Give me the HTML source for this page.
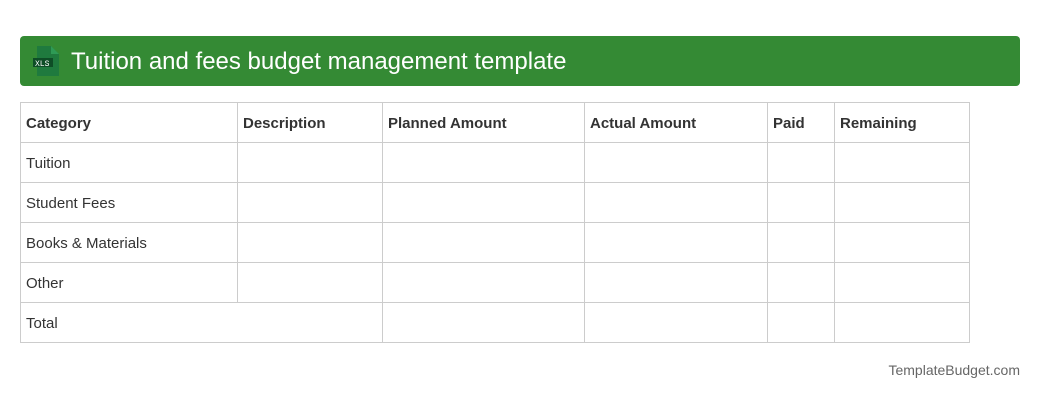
<!DOCTYPE html>
<html><head><style>
body{margin:0;width:1040px;height:400px;background:#fff;font-family:"Liberation Sans",sans-serif;position:relative}
.hdr{position:absolute;left:20px;top:36px;width:1000px;height:50px;background:#348a34;border-radius:4px}
.hdr .t{position:absolute;left:51px;top:12px;color:#fff;font-size:24px}
table{position:absolute;left:20px;top:102px;border-collapse:collapse;font-size:15px;color:#333}
td{border:1px solid #ccc;height:40px;padding:2px 5px 0;box-sizing:border-box}
.b td{font-weight:bold}
.f{position:absolute;right:20px;top:362px;color:#666;font-size:14px}
</style></head><body>
<div class="hdr">
<svg style="position:absolute;left:11px;top:9px" width="30" height="32" viewBox="0 0 30 32">
<path d="M6 1h14l8 8v22H6z" fill="#1f7a3e"/><path d="M20 1v8h8z" fill="#2e9a55"/>
<rect x="2" y="13" width="20" height="9" fill="#0e4d26"/>
<text x="4" y="21" font-size="8" fill="#fff" font-family="Liberation Mono">XLS</text></svg>
<div class="t">Tuition and fees budget management template</div></div>
<table>
<tr class="b"><td style="width:217px">Category</td><td style="width:145px">Description</td><td style="width:202px">Planned Amount</td><td style="width:183px">Actual Amount</td><td style="width:67px">Paid</td><td style="width:135px">Remaining</td></tr>
<tr><td>Tuition</td><td></td><td></td><td></td><td></td><td></td></tr>
<tr><td>Student Fees</td><td></td><td></td><td></td><td></td><td></td></tr>
<tr><td>Books &amp; Materials</td><td></td><td></td><td></td><td></td><td></td></tr>
<tr><td>Other</td><td></td><td></td><td></td><td></td><td></td></tr>
<tr><td colspan="2">Total</td><td></td><td></td><td></td><td></td></tr>
</table>
<div class="f">TemplateBudget.com</div>
</body></html>
